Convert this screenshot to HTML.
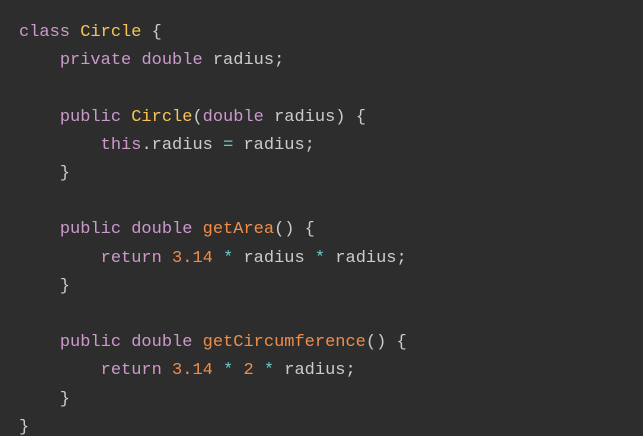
<!DOCTYPE html>
<html><head><style>
html,body{margin:0;padding:0;background:#2d2d2d;width:643px;height:436px;overflow:hidden}
pre{margin:0;padding:19px 0 0 19px;font-family:"Liberation Mono",monospace;font-size:17px;line-height:28.2px;color:#ccc;tab-size:4}
.k{color:#cc99cd}.c{color:#f8c555}.f{color:#f08d49}.n{color:#f08d49}.o{color:#67cdcc}
</style></head><body><pre><span class="k">class</span> <span class="c">Circle</span> {
    <span class="k">private</span> <span class="k">double</span> radius;

    <span class="k">public</span> <span class="c">Circle</span>(<span class="k">double</span> radius) {
        <span class="k">this</span>.radius <span class="o">=</span> radius;
    }

    <span class="k">public</span> <span class="k">double</span> <span class="f">getArea</span>() {
        <span class="k">return</span> <span class="n">3.14</span> <span class="o">*</span> radius <span class="o">*</span> radius;
    }

    <span class="k">public</span> <span class="k">double</span> <span class="f">getCircumference</span>() {
        <span class="k">return</span> <span class="n">3.14</span> <span class="o">*</span> <span class="n">2</span> <span class="o">*</span> radius;
    }
}</pre></body></html>
